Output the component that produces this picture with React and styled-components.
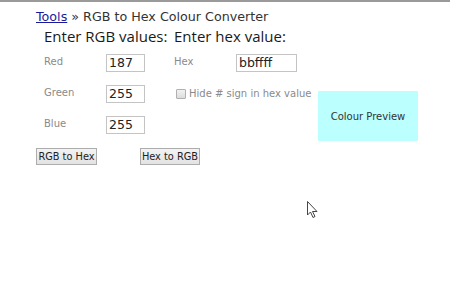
import React from 'react'
import styled, { createGlobalStyle } from 'styled-components'

const GlobalStyle = createGlobalStyle`
    html, body {
        margin: 0;
        padding: 0;
        background: #fff;
    }
    body {
        font-family: "DejaVu Sans", Verdana, sans-serif;
        color: #333;
    }
`

const Page = styled.div`
    position: relative;
    width: 450px;
    height: 307px;
    border-top: 2px solid #9a9a9a;
    box-sizing: border-box;
    padding: 7px 0 0 36px;
`

const Crumbs = styled.div`
    font-size: 12.7px;
    line-height: 16px;
    color: #333;

    > a {
        color: #1a1a9c;
        text-decoration: underline;
    }
`

const Headings = styled.div`
    display: flex;
    padding-left: 8px;
    font-family: "Open Sans", "Noto Sans", sans-serif;
    font-size: 15px;
    line-height: 20px;
    color: #1a1a1a;
    margin-top: 1px;
`

const Heading = styled.div`
    width: ${p => p.$w}px;
    white-space: nowrap;
`

const Form = styled.div`
    display: grid;
    grid-template-columns: 62px 68px 62px 82px 100px;
    grid-template-rows: 31px 31px 31px;
    margin-left: 8px;
    margin-top: 6px;
`

const Cell = styled.div`
    grid-column: ${p => p.$col};
    grid-row: ${p => p.$row};
`

const Label = styled(Cell)`
    font-size: 10px;
    line-height: 18px;
    padding-top: 1px;
    color: #8a8a8a;
`

const Field = styled.input`
    box-sizing: border-box;
    width: ${p => p.$w}px;
    height: 18px;
    margin: 1px 0 0 0;
    padding: 0 2px;
    border: 1px solid #c4c4c4;
    font-family: "DejaVu Sans", Verdana, sans-serif;
    font-size: 12.5px;
    color: #222;
    background: #fff;
    outline: none;
`

const CheckRow = styled.label`
    grid-column: 3 / span 2;
    grid-row: 2;
    display: flex;
    align-items: center;
    gap: 3px;
    padding: 1px 0 0 2px;
    height: 18px;
    font-size: 10px;
    color: #8a8a8a;
    white-space: nowrap;
`

const Box = styled.span`
    box-sizing: border-box;
    width: 10px;
    height: 10px;
    margin-top: 2px;
    border: 1px solid #b0b0b0;
    border-radius: 1px;
    background: linear-gradient(#f2f2f2, #dcdcdc);
`

const Preview = styled.div`
    grid-column: 5;
    grid-row: 2 / span 2;
    margin-top: 8px;
    height: 50px;
    background: #bbffff;
    display: flex;
    align-items: center;
    justify-content: center;
    font-size: 10px;
    color: #333;
`

const Buttons = styled.div`
    display: flex;
    gap: 43px;
    margin-top: 3px;
`

const Button = styled.button`
    box-sizing: border-box;
    width: ${p => p.$w}px;
    height: 17px;
    padding: 0;
    border: 1px solid #adadad;
    background: linear-gradient(#f3f3f3, #e3e3e3);
    font-family: "DejaVu Sans", Verdana, sans-serif;
    font-size: 9.8px;
    color: #222;
    line-height: 15px;
    white-space: nowrap;
`

const Cursor = styled.svg`
    position: absolute;
    left: 307px;
    top: 199px;
`

export default function App() {
    return (
        <>
            <GlobalStyle />
            <Page>
                <Crumbs><a href="#">Tools</a> » RGB to Hex Colour Converter</Crumbs>
                <Headings>
                    <Heading $w={130}>Enter RGB values:</Heading>
                    <Heading $w={140}>Enter hex value:</Heading>
                </Headings>
                <Form>
                    <Label $col={1} $row={1}>Red</Label>
                    <Cell $col={2} $row={1}><Field $w={39} defaultValue="187" /></Cell>
                    <Label $col={3} $row={1}>Hex</Label>
                    <Cell $col={4} $row={1}><Field $w={61} defaultValue="bbffff" /></Cell>

                    <Label $col={1} $row={2}>Green</Label>
                    <Cell $col={2} $row={2}><Field $w={39} defaultValue="255" /></Cell>
                    <CheckRow><Box />Hide # sign in hex value</CheckRow>
                    <Preview>Colour Preview</Preview>

                    <Label $col={1} $row={3}>Blue</Label>
                    <Cell $col={2} $row={3}><Field $w={39} defaultValue="255" /></Cell>
                </Form>
                <Buttons>
                    <Button $w={61}>RGB to Hex</Button>
                    <Button $w={60}>Hex to RGB</Button>
                </Buttons>
                <Cursor width="12" height="18" viewBox="0 0 12 18">
                    <path d="M0.5 0.5 L0.5 14 L3.5 11 L6 16.5 L8 15.5 L5.5 10.5 L10 10.5 Z" fill="#fff" stroke="#444" strokeWidth="1" />
                </Cursor>
            </Page>
        </>
    )
}
